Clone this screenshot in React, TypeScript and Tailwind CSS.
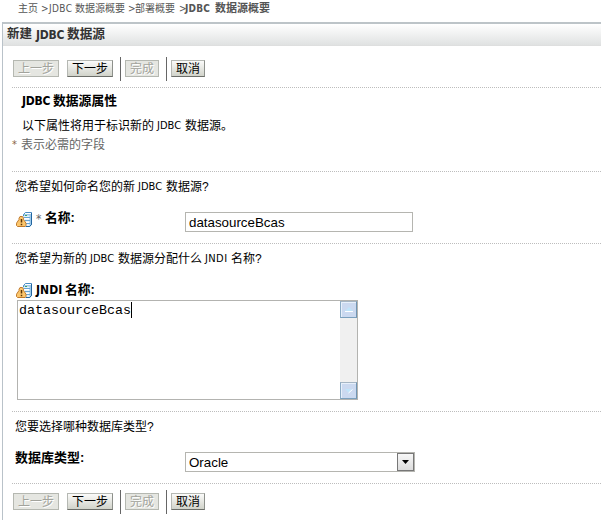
import type { ReactNode } from 'react'

const cjk = "font-['Liberation_Sans','Noto_Sans_CJK_SC',sans-serif]"

function Latin({ children, className = '' }: { children: ReactNode; className?: string }) {
	return (
		<span
			className={`inline-block whitespace-nowrap font-['DejaVu_Sans_Condensed','DejaVu_Sans',sans-serif] ${className}`}
		>
			{children}
		</span>
	)
}

function Button({ children, disabled = false }: { children: ReactNode; disabled?: boolean }) {
	return (
		<button
			disabled={disabled}
			className={`-mt-px h-[17px] shrink-0 border px-[4px] text-[12px] leading-[14px] ${
				disabled
					? 'border-[#b5b8b1] bg-[#e5e6e1] text-[#a2a39c] [text-shadow:1px_1px_0_#fff]'
					: 'border-[#b5b8b3] border-b-[#6c6e69] border-r-[#8d908b] bg-gradient-to-b from-[#fbfbfa] to-[#d1d3ca] text-black'
			}`}
		>
			{children}
		</button>
	)
}

function Toolbar() {
	return (
		<div className="flex h-[24px] items-center">
			<div className="ml-px flex gap-2">
				<Button disabled>
					<span className="block w-[36px]">上一步</span>
				</Button>
				<Button>
					<span className="block w-[36px]">下一步</span>
				</Button>
			</div>
			<div className="ml-[7px] mr-1 h-[24px] w-px bg-[#666]" />
			<Button disabled>
				<span className="block w-[24px]">完成</span>
			</Button>
			<div className="ml-[7px] mr-1 h-[24px] w-px bg-[#666]" />
			<Button>
				<span className="block w-[24px]">取消</span>
			</Button>
		</div>
	)
}

function Divider() {
	return (
		<div className="h-px bg-[repeating-linear-gradient(90deg,#bdbdbd_0_1px,transparent_1px_2px)]" />
	)
}

function RestartIcon() {
	return (
		<svg width="17" height="16" viewBox="0 0 17 16" className="shrink-0">
			<path d="M7 3 9 .5h7v12L14 15H8z" fill="#9cc9ea" />
			<path d="M7.5 3.5h6v11h-5z" fill="#e4f2fc" />
			<path d="M7.5 4V2.5l2-2h6v12l-2 2h-4" fill="none" stroke="#4a8dc4" />
			<path d="M15.5 1v11.5l-2 2H10" fill="none" stroke="#23659f" />
			<path d="M9 1.5h6M8 6.5h5M9 10.5h4" stroke="#fff" />
			<path d="M8 5.5h6M9 8.5h5M10 11.5h4" stroke="#67a5d5" />
			<path d="M9 3.5h2" stroke="#43a45b" />
			<path
				d="M4 4.5h2.5l1 1.8v1.2l2.5 3.7v2.3l-1 1H1.5l-1-1v-2.3L3 7.5V6.3z"
				fill="#fbc66d"
				stroke="#c17a2c"
				strokeLinejoin="round"
			/>
			<path d="M5.5 7v3.5M5.5 11.7v1.5" stroke="#5c3509" strokeWidth="1.5" />
		</svg>
	)
}

function ScrollButton({ down = false }: { down?: boolean }) {
	return (
		<div className="flex h-[17px] justify-center border border-b-[#7ba0be] border-l-[#8cabc5] border-r-[#7095b4] border-t-[#a5b5c4] bg-[#cbd9f0] pt-[5px] shadow-[inset_1px_1px_0_#e7f0fb]">
			{down ? (
				<svg width="8" height="6" viewBox="0 0 8 6">
					<path d="M0 1h7L4 5z" fill="#c0e4fa" />
					<path d="M3.5 5 7.5 1.5" fill="none" stroke="#fff" />
				</svg>
			) : (
				<svg width="8" height="5" viewBox="0 0 8 5">
					<path d="M0 4 4 0l4 4z" fill="#c0e4fa" />
					<path d="M0 4.5h8" stroke="#fff" />
				</svg>
			)}
		</div>
	)
}

export default function App() {
	return (
		<div className={`h-[520px] w-[601px] overflow-hidden bg-white text-[12px] text-black ${cjk}`}>
			<nav className="flex h-[22px] items-start whitespace-nowrap pl-[18px] text-[10px] leading-[17px] text-[#555]">
				<span className="w-[23px]">主页</span>
				<Latin className="w-[34px] tracking-[0.4px]">&gt;JDBC</Latin>
				<span className="w-[53px]">数据源概要</span>
				<Latin className="w-[7px]">&gt;</Latin>
				<span className="w-[44px]">部署概要</span>
				<Latin className="w-[6px]">&gt;</Latin>
				<Latin className="w-[30px] font-bold tracking-[0.2px]">JDBC</Latin>
				<span className="text-[11px] font-bold">数据源概要</span>
			</nav>

			<main className="ml-[2px] h-[498px] border-l border-[#b9c2c9]">
				<div className="flex h-[24px] items-center whitespace-nowrap border-b border-t-2 border-b-[#dedfdf] border-t-[#bdc4c8] bg-gradient-to-b from-white to-[#e0e2e2] pl-1 text-[#333]">
					<span className="w-[29px] text-[12.5px] font-bold">新建</span>
					<Latin className="w-[31px] font-bold tracking-[-0.2px]">JDBC</Latin>
					<span className="text-[12.7px] font-bold">数据源</span>
				</div>

				<div className="pl-[9px] pt-[11px]">
					<Toolbar />
					<div className="h-[6px]" />
					<Divider />

					<section className="h-[83px] whitespace-nowrap">
						<h1 className="flex h-[25px] items-center pl-[10px] font-bold">
							<Latin className="w-[31px] tracking-[-0.2px]">JDBC</Latin>
							<span className="text-[12.8px]">数据源属性</span>
						</h1>
						<p className="flex h-[25px] items-center pl-[10px]">
							<span className="w-[135px]">以下属性将用于标识新的</span>
							<Latin className="w-[28px] pt-px text-[11px]">JDBC</Latin>
							<span>数据源。</span>
						</p>
						<p className="flex h-[14px] items-center text-[#666]">
							<Latin className="w-[9px] text-[11px] text-[#886644]">*</Latin>
							<span>表示必需的字段</span>
						</p>
					</section>
					<Divider />

					<section className="h-[71px] whitespace-nowrap">
						<p className="flex h-[29px] items-center pl-[3px]">
							<span className="w-[123px]">您希望如何命名您的新</span>
							<Latin className="w-[28px] pt-px text-[11px]">JDBC</Latin>
							<span>数据源?</span>
						</p>
						<div className="flex items-start pl-1 pt-[11px]">
							<div className="flex w-[169px] items-center">
								<RestartIcon />
								<Latin className="-mt-[3px] ml-[3px] w-[9px] text-[12px] text-[#666]">*</Latin>
								<label htmlFor="name" className="-mt-[4px] text-[12.8px] font-bold leading-[16px]">
									名称:
								</label>
							</div>
							<input
								id="name"
								defaultValue="datasourceBcas"
								className="h-[20px] w-[228px] border border-[#b5b5b0] px-[3px] font-['Liberation_Sans',sans-serif] text-[13.33px]"
							/>
						</div>
					</section>
					<Divider />

					<section className="h-[167px] whitespace-nowrap">
						<p className="flex h-[29px] items-center pl-[3px]">
							<span className="w-[75px]">您希望为新的</span>
							<Latin className="w-[28px] pt-px text-[11px]">JDBC</Latin>
							<span className="w-[87px]">数据源分配什么</span>
							<Latin className="w-[26px] pt-px text-[11px] tracking-[0.4px]">JNDI</Latin>
							<span>名称?</span>
						</p>
						<div className="flex h-[27px] items-end pb-px pl-1">
							<RestartIcon />
							<label htmlFor="jndi" className="ml-[3px] flex h-[16px] items-start font-bold leading-[14px]">
								<Latin className="w-[29px] tracking-[0.1px]">JNDI</Latin>
								<span className="text-[12.8px]">名称:</span>
							</label>
						</div>
						<div className="ml-[5px] flex h-[100px] w-[341px] border border-[#b3b3b0]">
							<div
								id="jndi"
								className="flex flex-1 items-start pl-px pt-px font-['Liberation_Mono',monospace] text-[13.33px] leading-[17px]"
							>
								datasourceBcas
								<span className="h-[16px] w-px bg-black" />
							</div>
							<div className="flex w-[17px] flex-col justify-between bg-[#f0f0f0]">
								<ScrollButton />
								<ScrollButton down />
							</div>
						</div>
					</section>
					<Divider />

					<section className="h-[71px] whitespace-nowrap">
						<p className="flex h-[29px] items-center pl-[3px]">您要选择哪种数据库类型?</p>
						<div className="flex items-start pl-[3px] pt-[11px]">
							<span className="w-[170px] text-[13px] font-bold leading-[11px]">数据库类型:</span>
							<div className="flex h-[20px] w-[230px] items-center justify-between border border-[#b5b5b0] pl-[3px] font-['Liberation_Sans',sans-serif] text-[13.33px]">
								<span className="pt-px">Oracle</span>
								<span className="flex h-[18px] w-[17px] items-center justify-center border border-[#777] bg-gradient-to-b from-[#f7f7f7] to-[#dcdcdc]">
									<svg width="7" height="4" viewBox="0 0 7 4">
										<path d="M0 0h7L3.5 4z" fill="#000" />
									</svg>
								</span>
							</div>
						</div>
					</section>
					<Divider />
					<div className="pt-[6px]">
						<Toolbar />
					</div>
				</div>
			</main>
		</div>
	)
}
